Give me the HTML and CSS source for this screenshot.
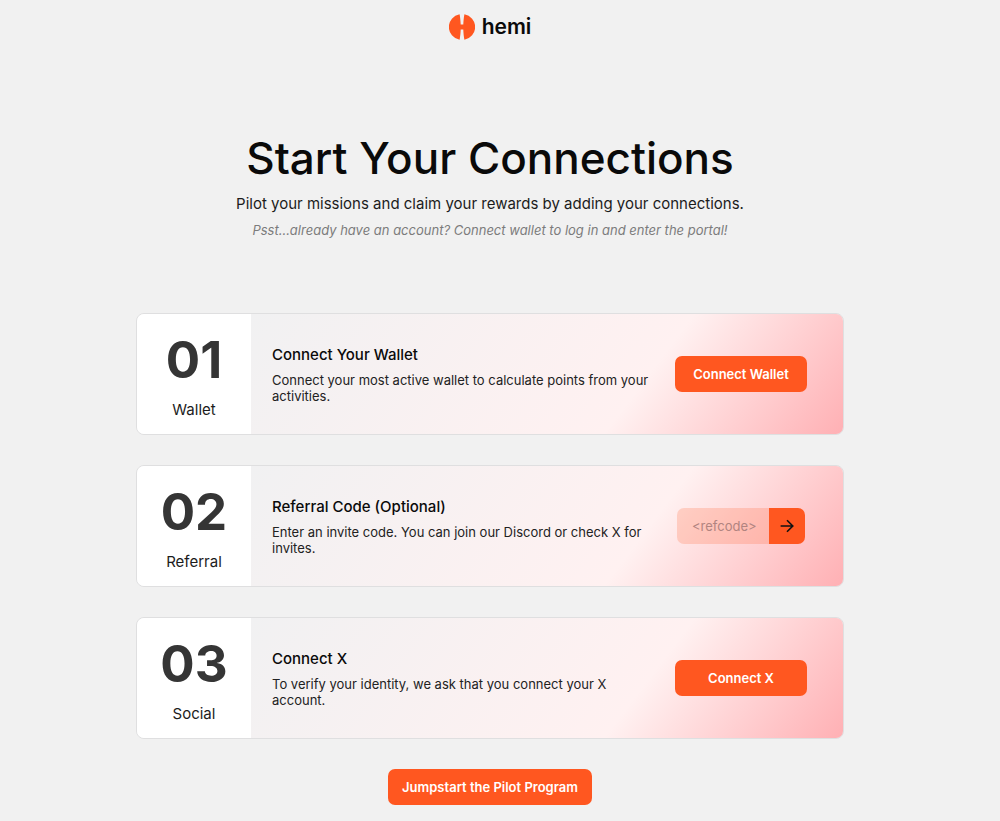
FILE: index.html
```
<!DOCTYPE html>
<html lang="en">
<head>
<meta charset="utf-8">
<meta name="viewport" content="width=device-width, initial-scale=1">
<title>Hemi – Start Your Connections</title>
<link rel="stylesheet" href="styles.css">
</head>
<body>
<header class="site-header">
  <svg class="logo-mark" viewBox="0 0 26 26" aria-hidden="true">
    <path d="M10.6 0.2A13 13 0 0 0 10.6 25.8C11.3 22 11.6 18.5 11.7 15.4H14.3C14.4 18.5 14.7 22 15.4 25.8A13 13 0 0 0 15.4 0.2C14.7 4 14.4 7.5 14.3 10.6H11.7C11.6 7.5 11.3 4 10.6 0.2Z"/>
  </svg>
  <span class="logo-name">hemi</span>
</header>
<main class="content">
  <section class="intro">
    <h1 class="title">Start Your Connections</h1>
    <p class="lead">Pilot your missions and claim your rewards by adding your connections.</p>
    <p class="hint">Psst...already have an account? Connect wallet to log in and enter the portal!</p>
  </section>
  <div class="steps">
    <section class="card">
      <div class="step"><span class="step-number">01</span><span class="step-name">Wallet</span></div>
      <div class="card-body">
        <div class="card-text">
          <h2 class="card-title">Connect Your Wallet</h2>
          <p class="card-desc">Connect your most active wallet to calculate points from your activities.</p>
        </div>
        <div class="card-action"><button class="button button-wide" type="button">Connect Wallet</button></div>
      </div>
    </section>
    <section class="card">
      <div class="step"><span class="step-number">02</span><span class="step-name">Referral</span></div>
      <div class="card-body">
        <div class="card-text">
          <h2 class="card-title"><label for="refcode">Referral Code (Optional)</label></h2>
          <p class="card-desc">Enter an invite code. You can join our Discord or check X for invites.</p>
        </div>
        <form class="card-action">
          <input class="code-input" id="refcode" type="text" placeholder="&lt;refcode&gt;">
          <button class="code-submit" type="button" aria-label="Submit referral code">
            <svg class="arrow" viewBox="0 0 14 14" aria-hidden="true"><path d="M0.6 7H12.6M7 1.2L12.8 7L7 12.8"/></svg>
          </button>
        </form>
      </div>
    </section>
    <section class="card">
      <div class="step"><span class="step-number">03</span><span class="step-name">Social</span></div>
      <div class="card-body">
        <div class="card-text">
          <h2 class="card-title">Connect X</h2>
          <p class="card-desc">To verify your identity, we ask that you connect your X account.</p>
        </div>
        <div class="card-action"><button class="button button-wide" type="button">Connect X</button></div>
      </div>
    </section>
  </div>
  <button class="button" type="button">Jumpstart the Pilot Program</button>
</main>
</body>
</html>
```
FILE: styles.css
```
* {
  box-sizing: border-box;
}

body {
  margin: 0;
  padding: 14px 20px 16px 0;
  background: #f1f1f1;
  color: #0a0a0a;
  font-family: Inter, "Liberation Sans", sans-serif;
}

h1, h2, p {
  margin: 0;
}

.site-header {
  display: flex;
  justify-content: center;
  align-items: center;
  gap: 7px;
  height: 26px;
}

.logo-mark {
  width: 26px;
  height: 26px;
  fill: #ff5720;
}

.logo-name {
  font-size: 21px;
  font-weight: 600;
  line-height: 26px;
}

.content {
  display: flex;
  flex-direction: column;
  align-items: center;
  gap: 30px;
  padding-top: 90px;
}

.intro {
  display: flex;
  flex-direction: column;
  align-items: center;
  padding-bottom: 43px;
  text-align: center;
}

.title {
  font-size: 44px;
  font-weight: 500;
  line-height: 56px;
}

.lead {
  margin-top: 7px;
  color: #1c1c1c;
  font-size: 15px;
  line-height: 22px;
}

.hint {
  margin-top: 5px;
  color: #7c7c7c;
  font-size: 13px;
  font-style: italic;
  line-height: 20px;
}

.steps {
  display: flex;
  flex-direction: column;
  gap: 30px;
  width: 100%;
  max-width: 708px;
}

.card {
  display: flex;
  min-height: 122px;
  overflow: hidden;
  border: 1px solid #dfdfe0;
  border-radius: 8px;
}

.step {
  display: flex;
  flex: 0 0 114px;
  flex-direction: column;
  align-items: center;
  justify-content: center;
  gap: 9px;
  padding-top: 2px;
  background: #fff;
}

.step-number {
  color: #353535;
  font-size: 51px;
  font-weight: 700;
  line-height: 60px;
}

.step-name {
  color: #1c1c1c;
  font-size: 15px;
  line-height: 22px;
}

.card-body {
  display: flex;
  flex: 1;
  align-items: center;
  gap: 6px;
  padding: 0 20px 0 21px;
  background: linear-gradient(127deg, #f1f1f2 0%, #fff1f1 65%, #ffb0b4 100%);
}

.card-text {
  flex: 1;
}

.card-title {
  font-size: 15px;
  font-weight: 500;
  line-height: 22px;
}

.card-desc {
  margin-top: 6px;
  color: #222;
  font-size: 13px;
  line-height: 16px;
}

.card-action {
  display: flex;
  flex: 0 0 164px;
  justify-content: center;
}

.button {
  height: 36px;
  padding: 0 14px;
  border: 0;
  border-radius: 7px;
  background: #ff5720;
  color: #fff;
  font: 600 13px Inter, "Liberation Sans", sans-serif;
}

.button-wide {
  width: 132px;
}

.code-input {
  width: 92px;
  height: 36px;
  padding: 0 8px 0 15px;
  border: 0;
  border-radius: 7px 0 0 7px;
  background: rgba(255, 87, 32, 0.2);
  color: #222;
  font: 13px Inter, "Liberation Sans", sans-serif;
}

.code-input::placeholder {
  color: #b18480;
  opacity: 1;
}

.code-submit {
  display: grid;
  place-items: center;
  width: 36px;
  height: 36px;
  padding: 0;
  border: 0;
  border-radius: 0 7px 7px 0;
  background: #ff5720;
}

.arrow {
  width: 14px;
  height: 14px;
  fill: none;
  stroke: #111;
  stroke-width: 1.6;
}
```
